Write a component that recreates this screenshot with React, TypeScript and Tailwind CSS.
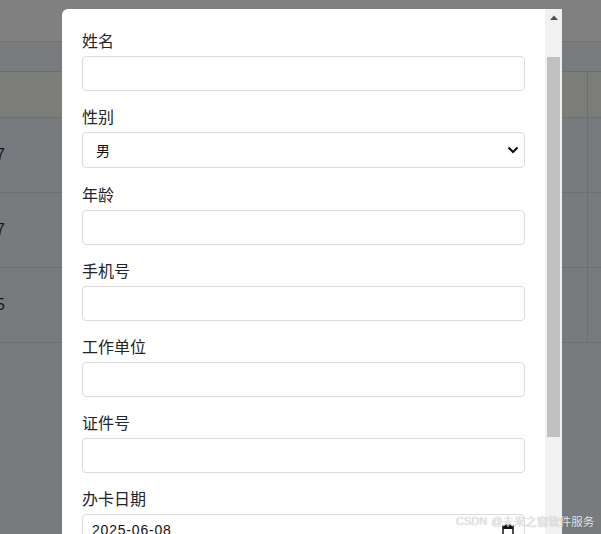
import React from "react";

const Field = ({ label, children }: { label: string; children: React.ReactNode }) => (
  <div className="mb-[13px]">
    <div className="text-[16px] leading-[24px] mb-[4px] text-[#212529]">{label}</div>
    {children}
  </div>
);

const TextInput = () => (
  <div className="h-[35px] w-full rounded-[4px] border border-[#dadada] bg-white" />
);

export default function App() {
  const cjk = { fontFamily: '"Noto Sans CJK SC", "Noto Sans", sans-serif' };
  return (
    <div
      className="relative w-[601px] h-[534px] overflow-hidden bg-[#777b7e]"
      style={cjk}
    >
      {/* background page */}
      <div className="h-[42px] bg-[#808080] border-b border-[#727476]" />
      <div className="h-[30px] bg-[#787c7f] border-b border-[#6c6e70]" />
      <div className="flex h-[46px] bg-[#7c7c7b] border-b border-[#6c6e70]">
        <div className="w-[588px] border-r border-[#6c6e70]" />
        <div className="flex-1" />
      </div>
      {["7", "7", "5"].map((d, i) => (
        <div key={i} className="flex h-[75px] border-b border-[#6c6f72]">
          <div className="w-[588px] border-r border-[#6c6f72] flex items-center">
            <span
              className="ml-[-4px] text-[16px] text-[#141516]"
              style={{ fontFamily: '"Liberation Sans", sans-serif' }}
            >
              {d}
            </span>
          </div>
          <div className="flex-1" />
        </div>
      ))}

      {/* modal */}
      <div className="absolute left-[62px] top-[9px] bottom-0 w-[500px] flex">
        <div className="flex-1 bg-white rounded-tl-[6px] px-5 pt-[19px] overflow-hidden">
          <Field label="姓名">
            <TextInput />
          </Field>
          <div className="mb-[14px]">
            <div className="text-[16px] leading-[24px] mb-[4px] text-[#212529]">性别</div>
            <div className="h-[36px] w-full rounded-[4px] border border-[#dadada] bg-white flex items-center justify-between pl-[13px] pr-[5px]">
              <span className="text-[14px] text-[#111]">男</span>
              <svg width="12" height="8" viewBox="0 0 12 8">
                <path d="M1.5 1.5 L6 6 L10.5 1.5" fill="none" stroke="#111" strokeWidth="2.2" />
              </svg>
            </div>
          </div>
          <Field label="年龄">
            <TextInput />
          </Field>
          <Field label="手机号">
            <TextInput />
          </Field>
          <Field label="工作单位">
            <TextInput />
          </Field>
          <Field label="证件号">
            <TextInput />
          </Field>
          <Field label="办卡日期">
            <div className="h-[35px] w-full rounded-[4px] border border-[#dadada] bg-white flex items-center justify-between pl-[9px] pr-[10px]">
              <span
                className="text-[14px] text-[#111] tracking-[0.8px] -mt-[3px]"
                style={{ fontFamily: '"Liberation Sans", sans-serif' }}
              >
                2025-06-08
              </span>
              <svg width="12" height="13" viewBox="0 0 12 13" className="-mt-[2px]">
                <rect x="1" y="2" width="10" height="10" fill="none" stroke="#111" strokeWidth="1.5" />
                <rect x="1" y="2" width="10" height="3" fill="#111" />
                <rect x="3" y="0" width="1.5" height="3" fill="#111" />
                <rect x="7.5" y="0" width="1.5" height="3" fill="#111" />
              </svg>
            </div>
          </Field>
        </div>
        {/* scrollbar */}
        <div className="w-[17px] bg-[#f1f1f1] flex flex-col items-center">
          <div className="h-[15px] flex items-center justify-center pt-[1px]">
            <svg width="8" height="5" viewBox="0 0 8 5">
              <path d="M0 5 L4 0.5 L8 5 Z" fill="#505050" />
            </svg>
          </div>
          <div className="mt-[33px] w-[13px] h-[380px] bg-[#c1c1c1]" />
        </div>
      </div>

      {/* watermark */}
      <div
        className="absolute left-[456px] top-[513px] flex items-center leading-[16px] text-[#e8e8e8] whitespace-nowrap"
        style={{ textShadow: "0 0 1px rgba(0,0,0,0.3)" }}
      >
        <span className="text-[11px]" style={{ fontFamily: '"Liberation Sans", sans-serif' }}>CSDN</span>
        <span className="text-[11px] ml-[4px]" style={{ fontFamily: '"Liberation Sans", sans-serif' }}>@</span>
        <span className="text-[11.5px]">未来之窗软件服务</span>
      </div>
    </div>
  );
}
